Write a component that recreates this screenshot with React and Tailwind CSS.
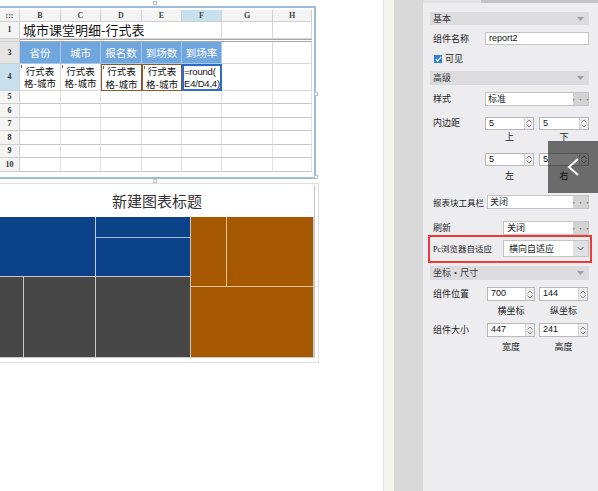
import React from "react";

const W = ["w-[20px]", "w-[41px]", "w-[40px]", "w-[41px]", "w-[40px]", "w-[40px]", "w-[51px]", "w-[39px]"];
const cjk = "font-['Noto_Sans_CJK_SC','Noto_Sans',sans-serif]";

function RowHead({ children, hl, gray }) {
  return (
    <div className={`w-[20px] shrink-0 flex items-center justify-center border-r border-b border-[#cfcfcf] text-[8px] font-bold text-[#333] font-['Liberation_Serif',serif] ${hl ? "bg-[#c6e0ee]" : gray ? "bg-[#e4e4e4]" : "bg-[#f4f4f4]"}`}>
      {children}
    </div>
  );
}

function Empty({ i }) {
  return <div className={`${W[i]} shrink-0 border-r border-b border-[#d6d6d6] bg-white`} />;
}

function Sheet() {
  const heads = [":::", "B", "C", "D", "E", "F", "G", "H"];
  const rows = [
    ["5", "h-[13px]"],
    ["6", "h-[14px]"],
    ["7", "h-[13px]"],
    ["8", "h-[14px]"],
    ["9", "h-[13px]"],
    ["10", "h-[14px]"],
  ];
  const blue = ["省份", "城市", "报名数", "到场数", "到场率"];
  return (
    <div className="mt-[6px] w-[316px] h-[173px] border-2 border-l-0 border-[#9cbcd9] pt-[2px] bg-white">
      <div className="flex h-[12px]">
        {heads.map((t, i) => (
          <div
            key={i}
            className={`${W[i]} shrink-0 flex items-center justify-center border-r border-b border-[#cfcfcf] text-[8px] font-bold text-[#444] font-['Liberation_Serif',serif] ${i === 5 ? "bg-[#c6e0ee]" : "bg-[#f4f4f4]"}`}
          >
            {t}
          </div>
        ))}
      </div>
      <div className="flex h-[17px]">
        <RowHead>1</RowHead>
        <div className={`w-[202px] shrink-0 border-r border-b border-[#d6d6d6] flex items-center pl-[3px] text-[13px] text-[#111] ${cjk}`}>城市课堂明细-行式表</div>
        <Empty i={6} />
        <Empty i={7} />
      </div>
      <div className="flex h-[3px]">
        <div className="w-[20px] shrink-0 border-r border-b border-[#cfcfcf] bg-[#e4e4e4]" />
        <div className="w-[292px] border-b border-t border-[#a8a8a8]" />
      </div>
      <div className="flex h-[22px]">
        <RowHead gray>3</RowHead>
        {blue.map((t, i) => (
          <div key={i} className={`${W[i + 1]} shrink-0 border-r border-b border-[#a9c9ec] bg-[#6fa6dd] text-white text-[10.5px] flex items-center justify-center ${cjk}`}>
            {t}
          </div>
        ))}
        <Empty i={6} />
        <Empty i={7} />
      </div>
      <div className="flex h-[27px]">
        <RowHead hl>4</RowHead>
        {[1, 2, 3, 4].map((i) => (
          <div
            key={i}
            className={`${W[i]} shrink-0 relative flex flex-col items-center justify-center text-[9.5px] leading-[12.5px] text-[#111] ${cjk} ${i >= 3 ? "border border-[#8a5a2c]" : "border-r border-b border-[#d6d6d6]"}`}
          >
            <div className="absolute left-[1px] top-[1px] w-[1px] h-[3px] bg-[#666]" />
            <span>行式表</span>
            <span>格-城市</span>
          </div>
        ))}
        <div className="w-[40px] shrink-0 relative border-2 border-[#2a6bcb] flex flex-col justify-center text-[9.5px] leading-[11.5px] tracking-[-0.2px] text-[#111] font-['Liberation_Sans',sans-serif] whitespace-nowrap">
          <span>=round(</span>
          <span>E4/D4,4)</span>
          <div className="absolute right-[-2px] bottom-[-2px] w-[3px] h-[3px] bg-[#2a6bcb]" />
        </div>
        <Empty i={6} />
        <Empty i={7} />
      </div>
      {rows.map(([n, h]) => (
        <div key={n} className={`flex ${h}`}>
          <RowHead>{n}</RowHead>
          {[1, 2, 3, 4, 5, 6, 7].map((i) => (
            <div key={i} className={`${W[i]} shrink-0 border-r border-b border-r-[#e2e2e2] border-b-[#c4c4c4] bg-white`} />
          ))}
        </div>
      ))}
    </div>
  );
}

function Chart() {
  return (
    <div className="mt-[4px] w-[319px] h-[180px] border-t border-r border-b border-[#dedede] bg-white">
      <div className="mt-[1px] w-[315px] h-[173px] border-r border-b border-[#c9c9c9] flex flex-col">
        <div className={`h-[32px] flex items-center justify-center text-[15px] text-[#333] ${cjk}`}>新建图表标题</div>
        <div className="flex h-[140px] gap-px bg-[#c9c9c9]">
          <div className="w-[190px] flex flex-col gap-px">
            <div className="h-[59px] flex gap-px">
              <div className="w-[95px] bg-[#0c428a]" />
              <div className="w-[94px] flex flex-col gap-px bg-[#a8bcd8]">
                <div className="h-[20px] bg-[#0c428a]" />
                <div className="h-[38px] bg-[#0c428a]" />
              </div>
            </div>
            <div className="h-[80px] flex gap-px">
              <div className="w-[23px] bg-[#474747]" />
              <div className="w-[71px] bg-[#474747]" />
              <div className="w-[94px] bg-[#474747]" />
            </div>
          </div>
          <div className="w-[122px] flex flex-col gap-px bg-[#e6c49a]">
            <div className="h-[69px] flex gap-px">
              <div className="w-[35px] bg-[#a55800]" />
              <div className="w-[86px] bg-[#a55800]" />
            </div>
            <div className="h-[70px] bg-[#a55800]" />
          </div>
        </div>
      </div>
    </div>
  );
}

function Section({ children, cls }) {
  return (
    <div className={`${cls} bg-[#dcdcde] flex items-center justify-between pl-[3px] pr-[5px] text-[9px] text-[#333]`}>
      <span>{children}</span>
      <svg width="7" height="4" viewBox="0 0 7 4"><path d="M0 0h7L3.5 4z" fill="#a0a0a0" /></svg>
    </div>
  );
}

function Dots() {
  return (
    <div className="w-[15px] shrink-0 bg-[#d3d3d3] flex items-center justify-center text-[7px] text-[#777] leading-none">···</div>
  );
}

function Spin({ v, w }) {
  return (
    <div className={`${w} shrink-0 h-full flex bg-white border border-[#b8b8b8]`}>
      <div className="flex-1 flex items-center pl-[3px] text-[9px] text-[#111] font-['Liberation_Sans',sans-serif]">{v}</div>
      <div className="w-[9px] bg-[#eeeeee] border-l border-[#d0d0d0] flex flex-col items-center justify-center gap-[1px]">
        <svg width="6" height="4" viewBox="0 0 6 4"><path d="M0.5 3.5L3 1l2.5 2.5" stroke="#777" fill="none" strokeWidth="0.9" /></svg>
        <svg width="6" height="4" viewBox="0 0 6 4"><path d="M0.5 0.5L3 3l2.5-2.5" stroke="#777" fill="none" strokeWidth="0.9" /></svg>
      </div>
    </div>
  );
}

function Caps({ a, b, h, w1, w2, gap, lw }) {
  return (
    <div className={`${h} flex items-center text-[9px] text-[#222]`}>
      <div className={`${lw} shrink-0`} />
      <div className={`${w1} shrink-0 text-center`}>{a}</div>
      <div className={`${gap} shrink-0`} />
      <div className={`${w2} shrink-0 text-center`}>{b}</div>
    </div>
  );
}

function Panel() {
  return (
    <div className={`relative w-[175px] h-full bg-[#ededf0] flex flex-col ${cjk} text-[9px] text-[#222]`}>
      <div className="flex h-[3px] shrink-0">
        <div className="w-[58px] bg-[#e2e2e4]" />
        <div className="flex-1 bg-[#c4c4c4]" />
      </div>
      <div className="pl-[7px] pr-[9px] flex flex-col">
        <Section cls="mt-[9px] h-[13px]">基本</Section>
        <div className="mt-[7px] h-[13px] flex items-center">
          <div className="w-[55px] shrink-0 pl-[3px]">组件名称</div>
          <div className="flex-1 h-full bg-white border border-[#c4c4c4] flex items-center pl-[3px] text-[9px] font-['Liberation_Sans',sans-serif] text-[#111]">report2</div>
        </div>
        <div className="mt-[8px] h-[12px] flex items-center pl-[4px] gap-[3px]">
          <div className="w-[8px] h-[8px] bg-[#2f7fd8] flex items-center justify-center">
            <svg width="7" height="6" viewBox="0 0 7 6"><path d="M0.8 3.2L2.6 5 6.2 0.8" stroke="white" strokeWidth="1.2" fill="none" /></svg>
          </div>
          <span>可见</span>
        </div>
        <Section cls="mt-[6px] h-[14px]">高级</Section>
        <div className="mt-[7px] h-[14px] flex items-center">
          <div className="w-[55px] shrink-0 pl-[3px]">样式</div>
          <div className="flex-1 h-full flex border border-[#c4c4c4]">
            <div className="flex-1 bg-white flex items-center pl-[2px]">标准</div>
            <Dots />
          </div>
        </div>
        <div className="mt-[11px] h-[13px] flex items-start">
          <div className="w-[55px] shrink-0 pl-[3px] leading-[12px]">内边距</div>
          <Spin v="5" w="w-[49px]" />
          <div className="w-[5px] shrink-0" />
          <Spin v="5" w="w-[50px]" />
        </div>
        <Caps a="上" b="下" h="h-[14px]" lw="w-[55px]" w1="w-[49px]" w2="w-[50px]" gap="w-[5px]" />
        <div className="mt-[9px] h-[13px] flex">
          <div className="w-[55px] shrink-0" />
          <Spin v="5" w="w-[49px]" />
          <div className="w-[5px] shrink-0" />
          <Spin v="5" w="w-[50px]" />
        </div>
        <Caps a="左" b="右" h="h-[20px]" lw="w-[55px]" w1="w-[49px]" w2="w-[50px]" gap="w-[5px]" />
        <div className="mt-[9px] h-[14px] flex items-center">
          <div className="w-[57px] shrink-0 pl-[3px] whitespace-nowrap text-[8.5px]">报表块工具栏</div>
          <div className="flex-1 h-full flex border border-[#c4c4c4]">
            <div className="flex-1 bg-white flex items-center pl-[2px]">关闭</div>
            <Dots />
          </div>
        </div>
        <div className="mt-[12px] h-[14px] flex items-center">
          <div className="w-[73px] shrink-0 pl-[3px]">刷新</div>
          <div className="flex-1 h-full flex border border-[#c4c4c4]">
            <div className="flex-1 bg-white flex items-center pl-[3px]">关闭</div>
            <Dots />
          </div>
        </div>
        <div className="ml-[-2px] mr-[-3px] h-[28px] border-2 border-[#ef3a3a] pt-[3px] pl-[3px] pr-[1px]">
          <div className="h-[17px] flex items-center">
            <div className="w-[70px] shrink-0 whitespace-nowrap text-[8.5px]">
              <span className="font-['Liberation_Serif',serif] text-[8px]">Pc</span>浏览器自适应
            </div>
            <div className="flex-1 h-full flex bg-white border border-[#c4c4c4]">
              <div className="flex-1 flex items-center pl-[5px]">横向自适应</div>
              <div className="w-[15px] bg-[#e0e0e0] flex items-center justify-center">
                <svg width="7" height="5" viewBox="0 0 7 5"><path d="M0.5 1l3 3 3-3" stroke="#666" fill="none" strokeWidth="1" /></svg>
              </div>
            </div>
          </div>
        </div>
        <Section cls="mt-[3px] h-[14px]">坐标・尺寸</Section>
        <div className="mt-[7px] h-[14px] flex items-center">
          <div className="w-[57px] shrink-0 pl-[3px]">组件位置</div>
          <Spin v="700" w="w-[48px]" />
          <div className="w-[4px] shrink-0" />
          <Spin v="144" w="w-[49px]" />
        </div>
        <Caps a="横坐标" b="纵坐标" h="h-[20px]" lw="w-[57px]" w1="w-[48px]" w2="w-[49px]" gap="w-[4px]" />
        <div className="mt-[2px] h-[14px] flex items-center">
          <div className="w-[57px] shrink-0 pl-[3px]">组件大小</div>
          <Spin v="447" w="w-[48px]" />
          <div className="w-[4px] shrink-0" />
          <Spin v="241" w="w-[49px]" />
        </div>
        <Caps a="宽度" b="高度" h="h-[20px]" lw="w-[57px]" w1="w-[48px]" w2="w-[49px]" gap="w-[4px]" />
      </div>
      <div className="absolute left-[125px] top-[141px] w-[50px] h-[52px] bg-black/55 flex items-center justify-center">
        <svg width="14" height="20" viewBox="0 0 14 20"><path d="M12 2L3 10l9 8" stroke="white" strokeWidth="2" fill="none" /></svg>
      </div>
    </div>
  );
}

export default function App() {
  return (
    <div className="w-[598px] h-[491px] flex overflow-hidden bg-white">
      <div className="relative w-[383px] h-full bg-white flex flex-col">
        <Sheet />
        <Chart />
        <div className="absolute left-[153px] top-[1px] w-[4px] h-[4px] border border-[#a9c2da] bg-white" />
        <div className="absolute left-[314px] top-[92px] w-[4px] h-[4px] border border-[#a9c2da] bg-white" />
        <div className="absolute left-[314px] top-[175px] w-[4px] h-[4px] border border-[#a9c2da] bg-white" />
        <div className="absolute left-[153px] top-[179px] w-[4px] h-[4px] border border-[#c9c9c9] bg-white" />
      </div>
      <div className="w-[11px] h-full bg-[#f4f4ef] border-l border-[#e2e2dc]" />
      <div className="w-[29px] h-full bg-[#d9d9d9]" />
      <Panel />
    </div>
  );
}
